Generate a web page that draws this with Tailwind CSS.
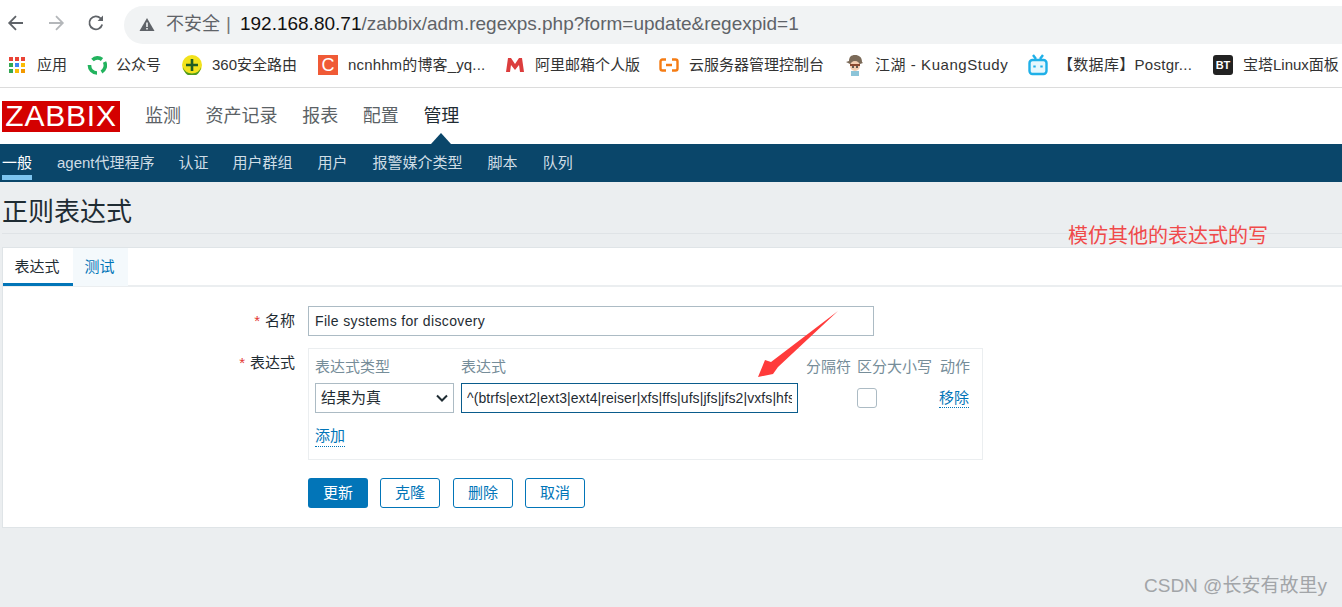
<!DOCTYPE html>
<html lang="zh">
<head>
    <meta charset="UTF-8">
    <title>正则表达式</title>
    <script src="https://cdn.jsdelivr.net/npm/@tailwindcss/browser@4"></script>
</head>
<body class="relative w-[1342px] h-[607px] overflow-hidden bg-[#ebeef0] font-['Liberation_Sans','Noto_Sans_CJK_SC',sans-serif] text-[#1f2c33]">
    <!-- browser toolbar -->
    <div class="h-[44px] bg-white flex items-center">
        <div class="w-[124px] flex items-center pl-[6px] gap-[20px] shrink-0 mt-[2px]">
            <svg class="w-[20px] h-[20px]" viewBox="0 0 20 20" fill="none" stroke="#5f6368" stroke-width="1.8"><path d="M17 10H3.5M10 3.2 3.2 10l6.8 6.8"/></svg>
            <svg class="w-[20px] h-[20px]" viewBox="0 0 20 20" fill="none" stroke="#b4b7ba" stroke-width="1.8"><path d="M3 10h13.500M10 3.200l6.800 6.800-6.800 6.800"/></svg>
            <svg class="w-[20px] h-[20px]" viewBox="0 0 20 20" fill="none" stroke="#5f6368" stroke-width="1.8"><path d="M16.200 11.500a6.500 6.500 0 1 1-1.600-6.200l1.600 1.700"/><path d="M17 2.600V8h-5.400z" fill="#5f6368" stroke="none"/></svg>
        </div>
        <div class="flex-1 h-[38px] mt-[5px] bg-[#f1f3f4] rounded-l-[19px] flex items-center pl-[15px] text-[19px] text-[#5f6368] whitespace-nowrap">
            <svg class="w-[16px] h-[15px] mr-[11px]" viewBox="0 0 16 15"><path d="M8 1 15.500 14H.5z" fill="#5f6368"/><path d="M7.200 5.500h1.600v4.500H7.200zM7.200 11h1.600v1.500H7.200z" fill="#f1f3f4"/></svg>
            <span class="text-[18px]">不安全</span><span class="ml-[6px] mr-[9px] text-[#777]">|</span>
            <span class="text-[#111]">192.168.80.71</span><span>/zabbix/adm.regexps.php?form=update&amp;regexpid=1</span>
        </div>
    </div>
    <!-- bookmarks -->
    <div class="h-[44px] pb-[1px] bg-white border-b border-[#dcdcdc] flex items-center text-[15px] text-[#333] whitespace-nowrap relative">
        <div class="flex items-center pl-[9px] w-[87px]">
            <div class="grid grid-cols-3 gap-[2px] w-[16px] mr-[12px]">
                <i class="w-[4px] h-[4px] bg-[#ea4335]"></i><i class="w-[4px] h-[4px] bg-[#ea4335]"></i><i class="w-[4px] h-[4px] bg-[#ea4335]"></i>
                <i class="w-[4px] h-[4px] bg-[#34a853]"></i><i class="w-[4px] h-[4px] bg-[#4285f4]"></i><i class="w-[4px] h-[4px] bg-[#fbbc05]"></i>
                <i class="w-[4px] h-[4px] bg-[#34a853]"></i><i class="w-[4px] h-[4px] bg-[#fbbc05]"></i><i class="w-[4px] h-[4px] bg-[#f29900]"></i>
            </div>
            <span>应用</span>
        </div>
        <div class="flex items-center w-[95px]">
            <svg class="w-[20px] h-[20px] mr-[9px]" viewBox="0 0 20 20" fill="none" stroke="#22b35e" stroke-width="3.6"><path d="M5.500 5a7 7 0 0 1 9.500-.5M17.500 7a7.500 7.500 0 0 1-3 10M10 18a7.500 7.500 0 0 1-7.500-8"/></svg>
            <span>公众号</span>
        </div>
        <div class="flex items-center w-[136px]">
            <svg class="w-[20px] h-[20px] mr-[10px]" viewBox="0 0 20 20"><circle cx="10" cy="10" r="10" fill="#f2e21c"/><path d="M1 12a9.500 9.500 0 0 0 18 0 9 9 0 0 1-18 0z" fill="#4f9a1e"/><path d="M8.700 4h2.600v4.700H16v2.600h-4.700V16H8.700v-4.700H4V8.700h4.700z" fill="#1f5c24"/></svg>
            <span>360安全路由</span>
        </div>
        <div class="flex items-center w-[187px]">
            <span class="w-[20px] h-[20px] mr-[10px] bg-[#f05a36] text-white text-[18px] leading-[20px] text-center">C</span>
            <span class="tracking-[0.15px]">ncnhhm的博客_yq...</span>
        </div>
        <div class="flex items-center w-[154px]">
            <svg class="w-[20px] h-[16px] mr-[10px]" viewBox="0 0 20 16"><path d="M1 15 3 1h3l4 6 4-6h3l2 14h-4l-1-7-4 5-4-5-1 7z" fill="#dc3d3d"/></svg>
            <span>阿里邮箱个人版</span>
        </div>
        <div class="flex items-center w-[186px]">
            <svg class="w-[20px] h-[14px] mr-[10px]" viewBox="0 0 20 14" fill="none" stroke="#f57c14" stroke-width="2.4"><path d="M7 1.500H3.500a2 2 0 0 0-2 2v7a2 2 0 0 0 2 2H7M13 1.500h3.500a2 2 0 0 1 2 2v7a2 2 0 0 1-2 2H13M7 7h6"/></svg>
            <span>云服务器管理控制台</span>
        </div>
        <div class="flex items-center w-[183px]">
            <svg class="w-[20px] h-[22px] mr-[10px]" viewBox="0 0 20 22"><path d="M1 8 4 7c0-4 2-6 6-6s7 2 7 7l1 1-3 1H5z" fill="#7b6a58"/><circle cx="10" cy="12" r="5" fill="#f3cdb0"/><path d="M5 10h10v2H5z" fill="#8a4a30"/><rect x="6" y="17" width="8" height="5" fill="#8cc4d8"/><circle cx="8" cy="13" r="1" fill="#333"/><circle cx="12" cy="13" r="1" fill="#333"/></svg>
            <span class="tracking-[0.55px]">江湖 - KuangStudy</span>
        </div>
        <div class="flex items-center w-[185px]">
            <svg class="w-[20px] h-[22px] mr-[10px]" viewBox="0 0 20 22" fill="#e6f7fd" stroke="#1fb0e8" stroke-width="2.400"><rect x="1.500" y="6" width="17" height="14" rx="3"/><path d="M5 1l3 4M15 1l-3 4" fill="none"/><path d="M6.500 11.500v2M13.500 11.500v2" fill="none"/></svg>
            <span class="tracking-[0.3px]">【数据库】Postgr...</span>
        </div>
        <div class="flex items-center">
            <span class="w-[20px] h-[20px] mr-[10px] rounded-[3px] bg-[#222] text-white text-[11px] leading-[20px] text-center font-bold">BT</span>
            <span>宝塔Linux面板</span>
        </div>
    </div>
    <!-- zabbix top menu -->
    <div class="h-[56px] bg-white flex items-center relative">
        <div class="ml-[2px] w-[118px] h-[31px] mt-[1px] bg-[#d40000] text-white text-[30px] leading-[30px] text-center tracking-[0.8px]">ZABBIX</div>
        <nav class="flex ml-[25px] gap-[24.600px] text-[18px] text-[#5b6266] mt-[1px]">
            <a>监测</a><a>资产记录</a><a>报表</a><a>配置</a><a class="text-[#1f2c33]">管理</a>
        </nav>
        <i class="absolute left-[431px] bottom-0 border-x-[10px] border-x-transparent border-b-[11px] border-b-[#0a466a]"></i>
    </div>
    <!-- sub menu -->
    <div class="h-[38px] bg-[#0a466a] flex text-[15px] leading-[37px] text-[#cfdde6] whitespace-nowrap">
        <a class="ml-[2px] w-[30px] text-center text-white h-[36px] border-b-[5px] border-[#7cc4ef] box-border">一般</a>
        <a class="ml-[25px]">agent代理程序</a>
        <a class="ml-[24px]">认证</a>
        <a class="ml-[24px]">用户群组</a>
        <a class="ml-[25px]">用户</a>
        <a class="ml-[25px]">报警媒介类型</a>
        <a class="ml-[25px]">脚本</a>
        <a class="ml-[25px]">队列</a>
    </div>
    <!-- title -->
    <div class="h-[52px] ml-[2px] border-b border-[#dfe3e6] flex items-center">
        <h1 class="text-[26px] leading-none mt-[8px]">正则表达式</h1>
    </div>
    <!-- card -->
    <div class="mt-[13px] ml-[2px] h-[281px] bg-white border border-[#dfe4e7] border-r-0">
        <div class="flex h-[39px] border-b-2 border-[#ebeef0] text-[15px]">
            <a class="w-[70px] h-[38px] pr-[2px] leading-[37px] text-center border-b-[3px] border-[#0275b8]">表达式</a>
            <a class="w-[55px] h-[38px] pr-[2px] leading-[37px] text-center text-[#0275b8] bg-[#f4f9fc]">测试</a>
        </div>
        <div class="pt-[19px] text-[15px]">
            <div class="flex items-start h-[30px]">
                <label class="w-[305px] pr-[13px] text-right leading-[30px]"><span class="text-[#e33734] mr-[5px]">*</span>名称</label>
                <input class="w-[566px] h-[30px] px-[6px] border border-[#acbbc4] text-[14px] tracking-[0.35px] text-[#1f2c33]" value="File systems for discovery">
            </div>
            <div class="flex items-start mt-[12px]">
                <label class="w-[305px] pr-[13px] text-right leading-[30px]"><span class="text-[#e33734] mr-[5px]">*</span>表达式</label>
                <div class="w-[675px] h-[112px] border border-[#ebeef0] px-[6px] pt-[8px]">
                    <div class="flex text-[#768d99] h-[20px] leading-[20px] whitespace-nowrap">
                        <span class="w-[146px]">表达式类型</span>
                        <span class="w-[345px]">表达式</span>
                        <span class="w-[51px]">分隔符</span>
                        <span class="w-[83px]">区分大小写</span>
                        <span>动作</span>
                    </div>
                    <div class="flex items-center h-[30px] mt-[6px]">
                        <div class="w-[139px] h-[30px] border border-[#acbbc4] flex items-center justify-between pl-[5px] pr-[5px]">
                            <span>结果为真</span>
                            <svg class="w-[12px] h-[8px]" viewBox="0 0 12 8" fill="none" stroke="#1f2c33" stroke-width="2"><path d="M1 1.500 6 6.500 11 1.500"/></svg>
                        </div>
                        <input class="ml-[7px] w-[337px] h-[30px] px-[5px] border border-[#0a5c8c] text-[14px] text-[#1f2c33] tracking-[0.08px]" value="^(btrfs|ext2|ext3|ext4|reiser|xfs|ffs|ufs|jfs|jfs2|vxfs|hfs|refs|ntfs|fat32)$">
                        <span class="ml-[59px] w-[20px] h-[20px] rounded-[3px] border border-[#acbbc4]"></span>
                        <a class="ml-[62px] text-[#0275b8] border-b border-dotted border-[#0275b8] leading-[18px]">移除</a>
                    </div>
                    <a class="inline-block mt-[13px] text-[#0275b8] border-b border-dotted border-[#0275b8] leading-[20px]">添加</a>
                </div>
            </div>
            <div class="flex ml-[305px] mt-[18px]">
                <button class="w-[60px] h-[30px] pt-[1px] rounded-[3px] bg-[#0275b8] text-white">更新</button>
                <button class="ml-[12px] w-[60px] h-[30px] pt-[1px] rounded-[3px] border border-[#0275b8] text-[#0275b8]">克隆</button>
                <button class="ml-[13px] w-[60px] h-[30px] pt-[1px] rounded-[3px] border border-[#0275b8] text-[#0275b8]">删除</button>
                <button class="ml-[12px] w-[60px] h-[30px] pt-[1px] rounded-[3px] border border-[#0275b8] text-[#0275b8]">取消</button>
            </div>
        </div>
    </div>
    <!-- annotations on top of the screenshot -->
    <div class="absolute left-[1068px] top-[224px] text-[20px] leading-[24px] text-[#f04a4a] whitespace-nowrap">模仿其他的表达式的写</div>
    <svg class="absolute left-[750px] top-[305px] w-[95px] h-[80px]" viewBox="0 0 95 80"><path d="M88 6 21 57 15 55 8 72 23 69 28 62Z" fill="#ff3b3b"/></svg>
    <div class="absolute left-[1144px] top-[574px] text-[19px] leading-[24px] text-[#a2a5a8] whitespace-nowrap">CSDN @长安有故里y</div>
</body>
</html>
